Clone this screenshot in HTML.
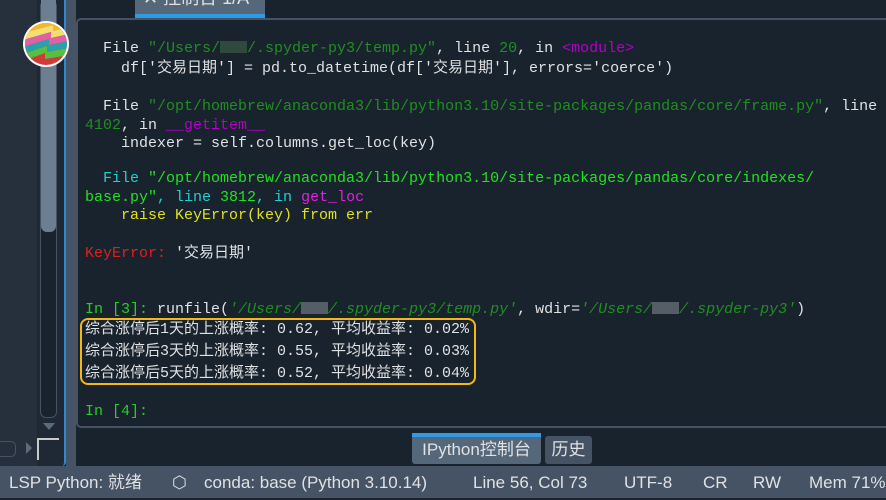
<!DOCTYPE html>
<html><head><meta charset="utf-8"><style>
*{margin:0;padding:0;box-sizing:border-box}
body{width:886px;height:498px;overflow:hidden;background:#19232d;position:relative;font-family:"Liberation Sans","Noto Sans CJK SC",sans-serif}
.abs{position:absolute}
.mono{font-family:"Liberation Mono","Noto Sans CJK SC",monospace;font-size:15px;white-space:pre;color:#e0e1e3;line-height:19px}
.g{color:#1f8f1f}.p{color:#b400c8}.w{color:#e0e1e3}
.c{color:#20d0d0}.G{color:#22e022}.m{color:#e020e0}.y{color:#e0e020}.r{color:#e02020}
.pr{color:#22d022}
.blur{display:inline-block;width:27px;height:12px;background:#2f4a3d;vertical-align:-1px}
.blurw{display:inline-block;width:27px;height:12px;background:#555d66;vertical-align:-1px}
</style></head><body>
<div class="abs" style="left:0;top:0;width:66px;height:466px;background:#1e2935;border-right:2px solid #2f88d0;border-radius:0 0 4px 0"></div>
<div class="abs" style="left:0;top:0;width:37px;height:466px;background:#25303c"></div>
<div class="abs" style="left:40px;top:0;width:17px;height:418px;border:1px solid #455364;border-radius:6px;background:#19232d"></div>
<div class="abs" style="left:41px;top:0;width:15px;height:232px;background:#6c7f91;border-radius:0 0 6px 6px"></div>
<div class="abs" style="left:43px;top:423px;width:0;height:0;border-left:6px solid transparent;border-right:6px solid transparent;border-top:7px solid #5a6b7c"></div>
<div class="abs" style="left:-6px;top:441px;width:22px;height:16px;border:1px solid #455364;border-radius:5px"></div>
<div class="abs" style="left:26px;top:442px;width:0;height:0;border-top:6px solid transparent;border-bottom:6px solid transparent;border-left:6px solid #5a6b7c"></div>
<div class="abs" style="left:37px;top:438px;width:22px;height:22px;border-left:2px solid #c8c8c8;border-top:2px solid #c8c8c8"></div>
<div class="abs" style="left:66px;top:0;width:10px;height:466px;background:#455364"></div>
<svg class="abs" style="left:23px;top:21px" width="46" height="46" viewBox="0 0 46 46">
<defs><clipPath id="cc"><circle cx="23" cy="23" r="21"/></clipPath></defs>
<circle cx="23" cy="23" r="23" fill="#fff"/>
<g clip-path="url(#cc)">
<rect width="46" height="46" fill="#d23a3a"/>
<polygon points="0,0 46,0 46,6 30,10 30,4 0,12" fill="#f5b82a"/>
<polygon points="0,12 30,4 30,10 46,6 46,13 28,17 28,11 0,19" fill="#f0e070"/>
<polygon points="0,19 28,11 28,17 46,13 46,20 26,24 26,18 0,26" fill="#e060a8"/>
<polygon points="0,26 26,18 26,24 46,20 46,27 24,31 24,25 0,33" fill="#2aa0a8"/>
<polygon points="0,33 24,25 24,31 46,27 46,34 22,38 22,32 0,40" fill="#58c040"/>
</g></svg>
<div class="abs" style="left:135px;top:0;width:130px;height:14px;background:#54687a;overflow:hidden"><div style="position:absolute;left:8px;top:-12px;color:#e0e1e3;font-size:18px;line-height:20px;white-space:nowrap">✕ 控制台 1/A</div></div>
<div class="abs" style="left:135px;top:14px;width:130px;height:4px;background:#2f9be8"></div>
<div class="abs" style="left:76px;top:18px;width:830px;height:410px;border:2px solid #455364;border-radius:5px;background:#19232d"></div>
<div class="abs mono" style="left:85px;top:39px"><span class="w">  File </span><span class="g">"/Users/<span class="blur"></span>/.spyder-py3/temp.py"</span>, line <span class="g">20</span>, in <span class="p">&lt;module&gt;</span></div>
<div class="abs mono" style="left:85px;top:59px">    df['交易日期'] = pd.to_datetime(df['交易日期'], errors='coerce')</div>
<div class="abs mono" style="left:85px;top:97px">  File <span class="g">"/opt/homebrew/anaconda3/lib/python3.10/site-packages/pandas/core/frame.py"</span>, line</div>
<div class="abs mono" style="left:85px;top:116px"><span class="g">4102</span>, in <span class="p">__getitem__</span></div>
<div class="abs mono" style="left:85px;top:134px">    indexer = self.columns.get_loc(key)</div>
<div class="abs mono" style="left:85px;top:169px"><span class="c">  File </span><span class="G">"/opt/homebrew/anaconda3/lib/python3.10/site-packages/pandas/core/indexes/</span></div>
<div class="abs mono" style="left:85px;top:188px"><span class="G">base.py"</span><span class="c">, line </span><span class="G">3812</span><span class="c">, in </span><span class="m">get_loc</span></div>
<div class="abs mono y" style="left:85px;top:206px">    raise KeyError(key) from err</div>
<div class="abs mono" style="left:85px;top:244px"><span class="r">KeyError:</span> '交易日期'</div>
<div class="abs mono" style="left:85px;top:300px"><span class="pr">In [3]: </span>runfile(<span class="g"><i>'/Users/<span class="blurw"></span>/.spyder-py3/temp.py'</i></span>, wdir=<span class="g"><i>'/Users/<span class="blurw"></span>/.spyder-py3'</i></span>)</div>
<div class="abs mono" style="left:85px;top:319px;line-height:22px">综合涨停后1天的上涨概率: 0.62, 平均收益率: 0.02%
综合涨停后3天的上涨概率: 0.55, 平均收益率: 0.03%
综合涨停后5天的上涨概率: 0.52, 平均收益率: 0.04%</div>
<div class="abs" style="left:80px;top:318px;width:396px;height:67px;border:2px solid #f3b814;border-radius:8px"></div>
<div class="abs mono pr" style="left:85px;top:402px">In [4]:</div>
<div class="abs" style="left:412px;top:433px;width:129px;height:4px;background:#2f9be8"></div>
<div class="abs" style="left:412px;top:437px;width:129px;height:27px;background:#54687a;color:#e0e1e3;font-size:17px;line-height:26px;text-align:center;border-radius:0 0 3px 3px">IPython控制台</div>
<div class="abs" style="left:545px;top:436px;width:47px;height:28px;background:#455364;color:#e0e1e3;font-size:17px;line-height:28px;text-align:center;border-radius:3px">历史</div>
<div class="abs" style="left:0;top:466px;width:886px;height:32px;background:#455364;color:#e0e1e3;font-size:17px;line-height:34px;white-space:pre"><span style="position:absolute;left:9px">LSP Python: 就绪</span><span style="position:absolute;left:172px">⬡</span><span style="position:absolute;left:204px">conda: base (Python 3.10.14)</span><span style="position:absolute;left:473px">Line 56, Col 73</span><span style="position:absolute;left:624px">UTF-8</span><span style="position:absolute;left:703px">CR</span><span style="position:absolute;left:753px">RW</span><span style="position:absolute;left:809px">Mem 71%</span></div>
</body></html>
